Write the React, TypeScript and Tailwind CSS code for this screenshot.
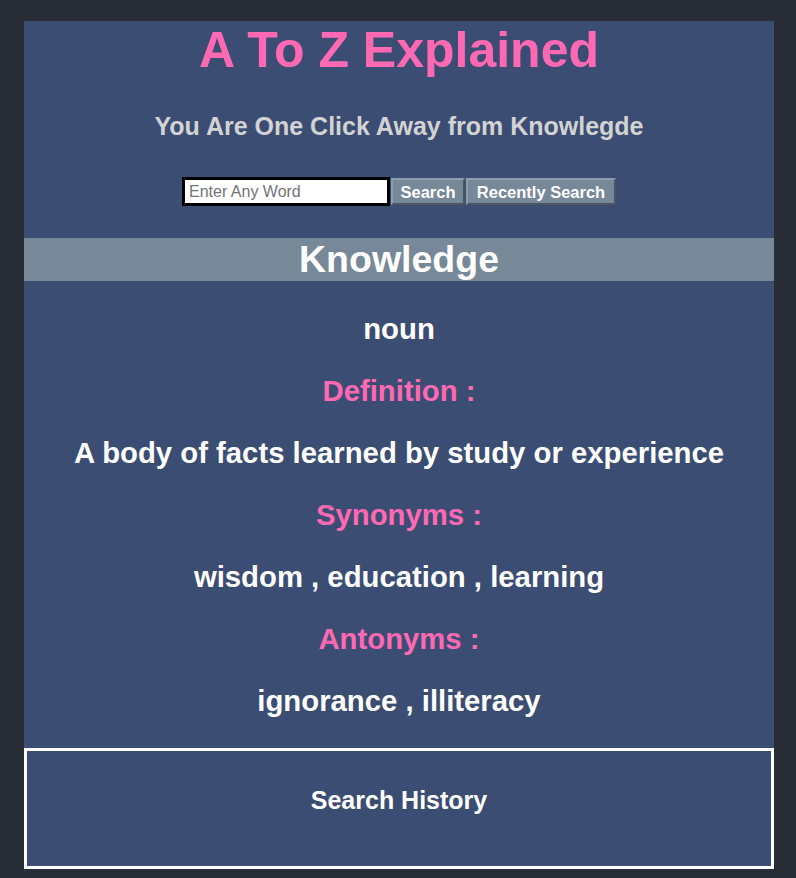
const sections = [
  { label: "Definition :", value: "A body of facts learned by study or experience" },
  { label: "Synonyms :", value: "wisdom , education , learning" },
  { label: "Antonyms :", value: "ignorance , illiteracy" },
];

export default function App() {
  return (
    <div className="min-h-screen bg-[#282c34] pt-[21px] font-['Liberation_Sans',Arial,sans-serif]">
      <div className="ml-[24px] w-[750px] bg-[#3b4d72] text-center">
        <h1 className="h-[58px] text-[50px] font-bold leading-[58px] text-[#ff69b4]">
          A To Z Explained
        </h1>
        <p className="mt-[33px] text-[25px] font-bold leading-[29px] text-[#d3d3d3]">
          You Are One Click Away from Knowlegde
        </p>

        <div className="mt-[36px] flex items-center justify-center">
          <input
            className="h-[29px] w-[208px] border-[3px] border-black bg-white px-[4px] text-[16px] text-black outline-none placeholder:text-[#757575]"
            placeholder="Enter Any Word"
          />
          <button className="ml-[1px] h-[27px] w-[74px] border-2 border-t-[#8e9dad] border-l-[#8e9dad] border-b-[#4b5563] border-r-[#4b5563] bg-[#778899] text-[16.5px] font-bold text-white">
            Search
          </button>
          <button className="ml-[1px] h-[27px] w-[150px] border-2 border-t-[#8e9dad] border-l-[#8e9dad] border-b-[#4b5563] border-r-[#4b5563] bg-[#778899] text-[16.5px] font-bold text-white">
            Recently Search
          </button>
        </div>

        <h2 className="mt-[32px] h-[43px] bg-[#778899] text-[37.5px] font-bold leading-[43px] text-white">
          Knowledge
        </h2>

        <div className="flex flex-col gap-[28px] pt-[31px] pb-[30px] text-[29.3px] font-bold leading-[34px]">
          <p className="text-white">noun</p>
          {sections.map((s) => (
            <div key={s.label} className="flex flex-col gap-[28px]">
              <p className="text-[#ff69b4]">{s.label}</p>
              <p className="text-white">{s.value}</p>
            </div>
          ))}
        </div>

        <div className="h-[121px] border-[3px] border-white pt-[35px]">
          <h3 className="text-[25px] font-bold leading-[29px] text-white">Search History</h3>
        </div>
      </div>
    </div>
  );
}
